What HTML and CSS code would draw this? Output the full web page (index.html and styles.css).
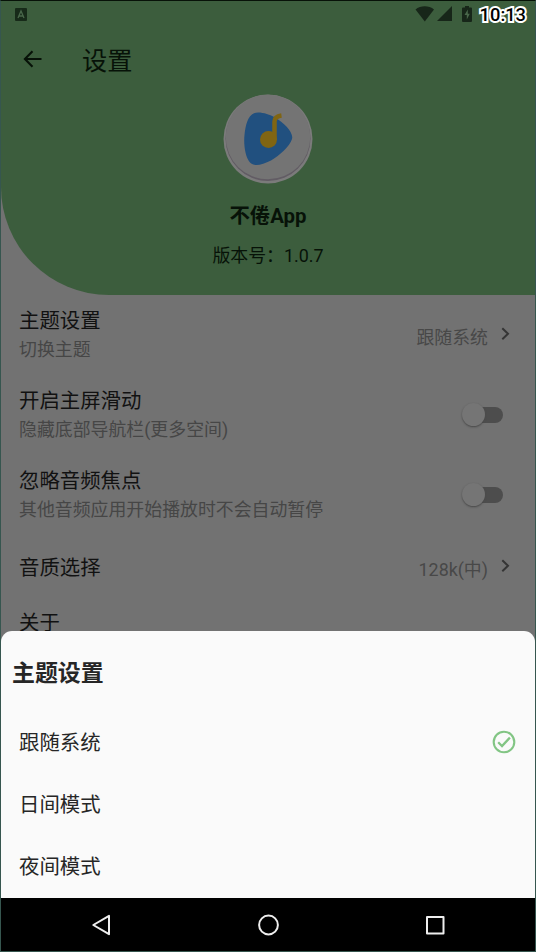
FILE: index.html
```html
<!DOCTYPE html>
<html lang="zh-CN">
<head>
<meta charset="utf-8">
<title>设置</title>
<link rel="stylesheet" href="styles.css">
</head>
<body>
<div class="device">
  <header class="hero">
    <div class="status">
      <svg class="ime" width="12" height="13" viewBox="0 0 12 13"><rect width="12" height="13" rx="1" fill="#172a19"/><path d="M3 10 6 3l3 7M4 8h4" fill="none" stroke="#49674a" stroke-width="1.3"/></svg>
      <div class="signals">
        <svg width="20" height="16" viewBox="0 0 20 16"><path d="M0.5 3.5C5.5-.8 14-.8 19 3.500L9.800 15.500Z" fill="#172619"/></svg>
        <svg width="15" height="15" viewBox="0 0 15 15"><path d="M15 0v15H0Z" fill="#172619"/></svg>
        <svg class="battery" width="10" height="16" viewBox="0 0 10 16"><path d="M3 0h4v1.500h2q1 0 1 1V15q0 1-1 1H1q-1 0-1-1V2.500q0-1 1-1h2Z" fill="#172619"/><path d="M5.800 3.500 2.500 9H4.800v4.500L7.800 7.700H5.800Z" fill="#49674a"/></svg>
        <time class="clock">10:13</time>
      </div>
    </div>
    <div class="appbar">
      <svg width="20" height="18" viewBox="0 0 20 18"><path d="M9.500 1.300 1.900 9l7.600 7.700M2 9h16.500" fill="none" stroke="#071208" stroke-width="2.100"/></svg>
      <h1>设置</h1>
    </div>
    <div class="about">
      <svg class="logo" width="90" height="90" viewBox="0 0 90 90">
        <circle cx="45" cy="45" r="44.500" fill="#7b7b7b"/>
        <circle cx="45" cy="44.500" r="42.500" fill="#625c64"/>
        <circle cx="45" cy="43" r="42.300" fill="#747474"/>
        <path d="M31 19.200C36 17.200 46 20 52 23.500C61 28.500 71 39 69 45C67 52 56 62 48 66.500C39 71 31 73 27 68.500C22 63 20.500 50 21.500 41C22.500 31 25 21.500 31 19.200Z" fill="#21507f"/>
        <circle cx="45.500" cy="45.500" r="8.500" fill="#806513"/>
        <path d="M51.500 46V27.500Q51.500 22.500 58.500 21.500" fill="none" stroke="#806513" stroke-width="4.500"/>
      </svg>
      <h2>不倦App</h2>
      <p>版本号：1.0.7</p>
    </div>
  </header>
  <main class="settings">
    <section class="row">
      <div class="label"><h3>主题设置</h3><p>切换主题</p></div>
      <div class="value">跟随系统<svg width="9" height="14" viewBox="0 0 9 14"><path d="m1.300 1.300 5.700 5.500-5.700 5.500" fill="none" stroke="#353535" stroke-width="2"/></svg></div>
    </section>
    <section class="row">
      <div class="label"><h3>开启主屏滑动</h3><p>隐藏底部导航栏(更多空间)</p></div>
      <div class="switch"></div>
    </section>
    <section class="row">
      <div class="label"><h3>忽略音频焦点</h3><p>其他音频应用开始播放时不会自动暂停</p></div>
      <div class="switch"></div>
    </section>
    <section class="row compact">
      <div class="label"><h3>音质选择</h3></div>
      <div class="value">128k(中)<svg width="9" height="14" viewBox="0 0 9 14"><path d="m1.300 1.300 5.700 5.500-5.700 5.500" fill="none" stroke="#353535" stroke-width="2"/></svg></div>
    </section>
    <section class="row last"><div class="label"><h3>关于</h3></div></section>
  </main>
  <div class="sheet">
    <h2>主题设置</h2>
    <ul>
      <li><span>跟随系统</span><svg width="24" height="24" viewBox="0 0 24 24" fill="none" stroke="#82c584"><circle cx="12" cy="12" r="10.300" stroke-width="2.100"/><path d="m6.200 12.300 3.800 3.700 7.900-8.400" stroke-width="2.300"/></svg></li>
      <li><span>日间模式</span></li>
      <li><span>夜间模式</span></li>
    </ul>
  </div>
  <nav class="navbar">
    <svg width="24" height="24" viewBox="0 0 24 24"><path d="M19 2.800v18.400L3.300 12Z"/></svg>
    <svg width="24" height="24" viewBox="0 0 24 24"><circle cx="11.500" cy="12" r="9.400"/></svg>
    <svg width="24" height="24" viewBox="0 0 24 24"><rect x="4" y="4" width="16.500" height="16.500"/></svg>
  </nav>
</div>
</body>
</html>
```

FILE: styles.css
```css
* { box-sizing: border-box; margin: 0; padding: 0; }

body {
  width: 536px;
  height: 952px;
  overflow: hidden;
  font-family: Roboto, "Noto Sans CJK SC", sans-serif;
}

h1, h2, h3 { font-weight: 400; }
svg { display: block; flex: none; }

.device {
  position: relative;
  display: flex;
  flex-direction: column;
  width: 536px;
  height: 952px;
  background: #727272;
  border: 1px solid #36564f;
  border-top-color: #071208;
}

.hero {
  flex: none;
  height: 294px;
  background: #3c5d3d;
  border-bottom-left-radius: 108px;
  color: #071208;
}

.status {
  display: flex;
  justify-content: space-between;
  height: 28px;
  padding: 5px 9px 0 14px;
}
.ime { margin-top: 2px; }
.signals { display: flex; align-items: flex-start; }
.signals svg { margin-right: 2px; }
.signals .battery { margin: 0 8px 0 8px; }
.clock {
  margin-top: -3px;
  font-size: 18.3px;
  font-weight: 500;
  line-height: 24px;
  color: #000;
  -webkit-text-stroke: 4px #fff;
  paint-order: stroke fill;
}

.appbar {
  display: flex;
  align-items: center;
  gap: 39px;
  height: 60px;
  padding-left: 22px;
}
.appbar h1 { font-size: 25.2px; line-height: 36px; padding-top: 6px; }

.about { display: flex; flex-direction: column; align-items: center; padding-top: 5px; }
.about h2 { margin-top: 18px; font-size: 20.4px; font-weight: 700; line-height: 28px; }
.about p { margin-top: 13px; font-size: 17.9px; line-height: 26px; }

.row {
  display: flex;
  justify-content: space-between;
  align-items: center;
  height: 80px;
  padding: 0 25px 0 18px;
}
.label h3 { font-size: 20.4px; line-height: 30px; color: #111; }
.label p { font-size: 17.9px; line-height: 28px; color: #464646; }
.row.compact { height: 64px; }
.row.compact .label { padding-top: 2px; }
.row.last { height: 48px; }
.value {
  display: flex;
  align-items: center;
  gap: 13px;
  padding-top: 1px;
  font-size: 17.9px;
  color: #484848;
}
.value svg { position: relative; top: -2px; }

.switch {
  position: relative;
  width: 31px;
  height: 16px;
  margin-right: 7px;
  border-radius: 8px;
  background: #4d4d4d;
}
.switch::before {
  content: "";
  position: absolute;
  left: -10px;
  top: -4px;
  width: 23px;
  height: 23px;
  border-radius: 50%;
  background: #757575;
  box-shadow: 0 1px 2px #484848;
}

.sheet {
  position: absolute;
  left: 0;
  right: 0;
  bottom: 53px;
  height: 267px;
  border-radius: 11px 11px 0 0;
  background: #fafafa;
  color: #262626;
}
.sheet h2 {
  height: 80px;
  padding-left: 11px;
  font-size: 22.9px;
  font-weight: 700;
  line-height: 85px;
}
.sheet ul { list-style: none; }
.sheet li {
  display: flex;
  justify-content: space-between;
  align-items: center;
  height: 62px;
  padding: 0 19px 0 18px;
  font-size: 20.4px;
}
.sheet li span { padding-bottom: 2px; }

.navbar {
  display: flex;
  justify-content: space-between;
  align-items: center;
  height: 53px;
  margin-top: auto;
  padding: 0 88px 0 89px;
  background: #000;
}
.navbar svg { fill: none; stroke: #eee; stroke-width: 2; stroke-linejoin: round; }
```
